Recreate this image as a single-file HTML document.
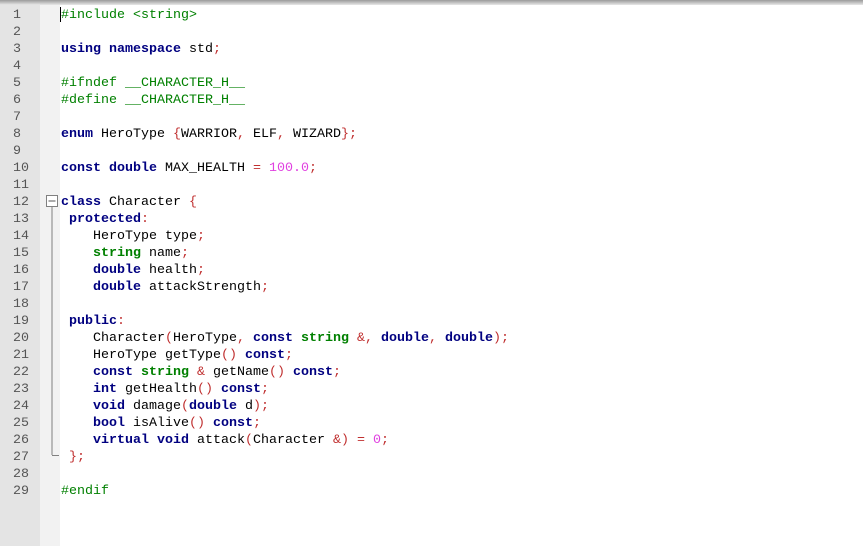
<!DOCTYPE html>
<html><head><meta charset="utf-8"><style>
*{margin:0;padding:0;box-sizing:border-box}
html,body{width:863px;height:546px;overflow:hidden;background:#fff}
.top{position:absolute;left:0;top:0;width:863px;height:5px;background:linear-gradient(#9a9a9a,#c8c8c8 60%,#e8e8e8)}
.gut{position:absolute;left:0;top:5px;width:40px;height:541px;background:#e4e4e4}
.fold{position:absolute;left:40px;top:5px;width:20px;height:541px;background:#f2f2f2}
.ln,.code{position:absolute;top:7px;font-family:"Liberation Mono",monospace;font-size:13.33px;line-height:17px;white-space:pre}
.ln{left:13px;color:#555}
.code{left:61px;color:#000}
.k{color:#000080;font-weight:bold}
.t{color:#008000;font-weight:bold}
.p{color:#008000}
.o{color:#c03030}
.n{color:#e040e0}
.caret{position:absolute;left:60px;top:7px;width:1px;height:15px;background:#000}
</style></head><body>
<div class="top"></div>
<div class="gut"></div>
<div class="fold"></div>
<svg style="position:absolute;left:40px;top:0" width="22" height="546">
<rect x="6.5" y="195.5" width="11" height="11" fill="#fff" stroke="#808080"/>
<line x1="8.5" y1="201" x2="15.5" y2="201" stroke="#555"/>
<line x1="12" y1="207" x2="12" y2="455" stroke="#808080"/>
<line x1="12" y1="455.5" x2="19" y2="455.5" stroke="#808080"/>
</svg>
<div class="caret"></div>
<div class="ln">1
2
3
4
5
6
7
8
9
10
11
12
13
14
15
16
17
18
19
20
21
22
23
24
25
26
27
28
29</div>
<div class="code"><span class="p">#include &lt;string&gt;</span>

<span class="k">using namespace</span> std<span class="o">;</span>

<span class="p">#ifndef __CHARACTER_H__</span>
<span class="p">#define __CHARACTER_H__</span>

<span class="k">enum</span> HeroType <span class="o">{</span>WARRIOR<span class="o">,</span> ELF<span class="o">,</span> WIZARD<span class="o">};</span>

<span class="k">const double</span> MAX_HEALTH <span class="o">=</span> <span class="n">100.0</span><span class="o">;</span>

<span class="k">class</span> Character <span class="o">{</span>
 <span class="k">protected</span><span class="o">:</span>
    HeroType type<span class="o">;</span>
    <span class="t">string</span> name<span class="o">;</span>
    <span class="k">double</span> health<span class="o">;</span>
    <span class="k">double</span> attackStrength<span class="o">;</span>

 <span class="k">public</span><span class="o">:</span>
    Character<span class="o">(</span>HeroType<span class="o">,</span> <span class="k">const</span> <span class="t">string</span> <span class="o">&amp;,</span> <span class="k">double</span><span class="o">,</span> <span class="k">double</span><span class="o">);</span>
    HeroType getType<span class="o">()</span> <span class="k">const</span><span class="o">;</span>
    <span class="k">const</span> <span class="t">string</span> <span class="o">&amp;</span> getName<span class="o">()</span> <span class="k">const</span><span class="o">;</span>
    <span class="k">int</span> getHealth<span class="o">()</span> <span class="k">const</span><span class="o">;</span>
    <span class="k">void</span> damage<span class="o">(</span><span class="k">double</span> d<span class="o">);</span>
    <span class="k">bool</span> isAlive<span class="o">()</span> <span class="k">const</span><span class="o">;</span>
    <span class="k">virtual void</span> attack<span class="o">(</span>Character <span class="o">&amp;)</span> <span class="o">=</span> <span class="n">0</span><span class="o">;</span>
 <span class="o">};</span>

<span class="p">#endif</span></div>
</body></html>
